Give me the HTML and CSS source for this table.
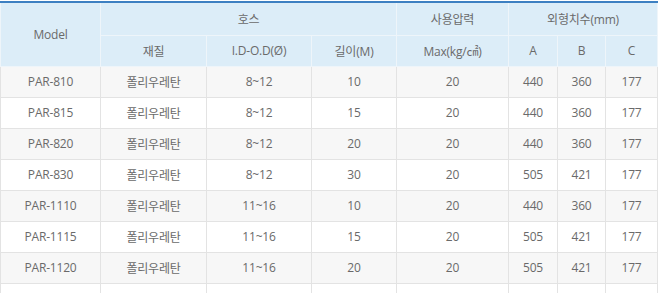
FILE: index.html
```html
<!DOCTYPE html>
<html lang="ko">
<head>
<meta charset="utf-8">
<link rel="stylesheet" href="styles.css">
</head>
<body>
<table class="spec">
  <colgroup>
    <col class="c-model"><col class="c-mat"><col class="c-dia"><col class="c-len"><col class="c-max"><col class="c-a"><col class="c-b"><col class="c-c">
  </colgroup>
  <thead>
    <tr class="h1">
      <th rowspan="2">Model</th>
      <th colspan="3">호스</th>
      <th>사용압력</th>
      <th colspan="3">외형치수(mm)</th>
    </tr>
    <tr class="h2">
      <th>재질</th>
      <th>I.D-O.D(Ø)</th>
      <th>길이(M)</th>
      <th>Max(kg/㎠)</th>
      <th>A</th>
      <th>B</th>
      <th>C</th>
    </tr>
  </thead>
  <tbody>
    <tr><td>PAR-810</td><td>폴리우레탄</td><td>8~12</td><td>10</td><td>20</td><td>440</td><td>360</td><td>177</td></tr>
    <tr><td>PAR-815</td><td>폴리우레탄</td><td>8~12</td><td>15</td><td>20</td><td>440</td><td>360</td><td>177</td></tr>
    <tr><td>PAR-820</td><td>폴리우레탄</td><td>8~12</td><td>20</td><td>20</td><td>440</td><td>360</td><td>177</td></tr>
    <tr><td>PAR-830</td><td>폴리우레탄</td><td>8~12</td><td>30</td><td>20</td><td>505</td><td>421</td><td>177</td></tr>
    <tr><td>PAR-1110</td><td>폴리우레탄</td><td>11~16</td><td>10</td><td>20</td><td>440</td><td>360</td><td>177</td></tr>
    <tr><td>PAR-1115</td><td>폴리우레탄</td><td>11~16</td><td>15</td><td>20</td><td>505</td><td>421</td><td>177</td></tr>
    <tr><td>PAR-1120</td><td>폴리우레탄</td><td>11~16</td><td>20</td><td>20</td><td>505</td><td>421</td><td>177</td></tr>
    <tr class="tail"><td></td><td></td><td></td><td></td><td></td><td></td><td></td><td></td></tr>
  </tbody>
</table>
</body>
</html>
```
FILE: styles.css
```css
html, body {
  margin: 0;
  padding: 0;
  background: #ffffff;
}
body {
  padding-top: 1px;
  font-family: "Open Sans", "Noto Sans CJK KR", sans-serif;
  font-size: 12px;
  color: #6a6a6a;
}
.spec {
  border-collapse: collapse;
  table-layout: fixed;
  width: 657px;
  border-top: 2px solid #3d80c2;
}
.c-model { width: 100px; }
.c-mat { width: 106px; }
.c-dia { width: 105px; }
.c-len { width: 85px; }
.c-max { width: 112px; }
.c-a { width: 49px; }
.c-b { width: 48px; }
.c-c { width: 52px; }
.spec th, .spec td {
  padding: 0;
  text-align: center;
  font-weight: normal;
  border: 1px solid #e3e3e3;
  letter-spacing: -0.2px;
}
.spec th {
  background: #dcedf8;
  border-color: #eef5fa;
}
.spec thead tr:first-child th { border-top: 0; }
.h1 { height: 33px; }
.h2 { height: 31px; }
.spec tbody tr { height: 31px; }
.spec tbody tr:nth-child(odd) td { background: #f7f7f7; }
```
